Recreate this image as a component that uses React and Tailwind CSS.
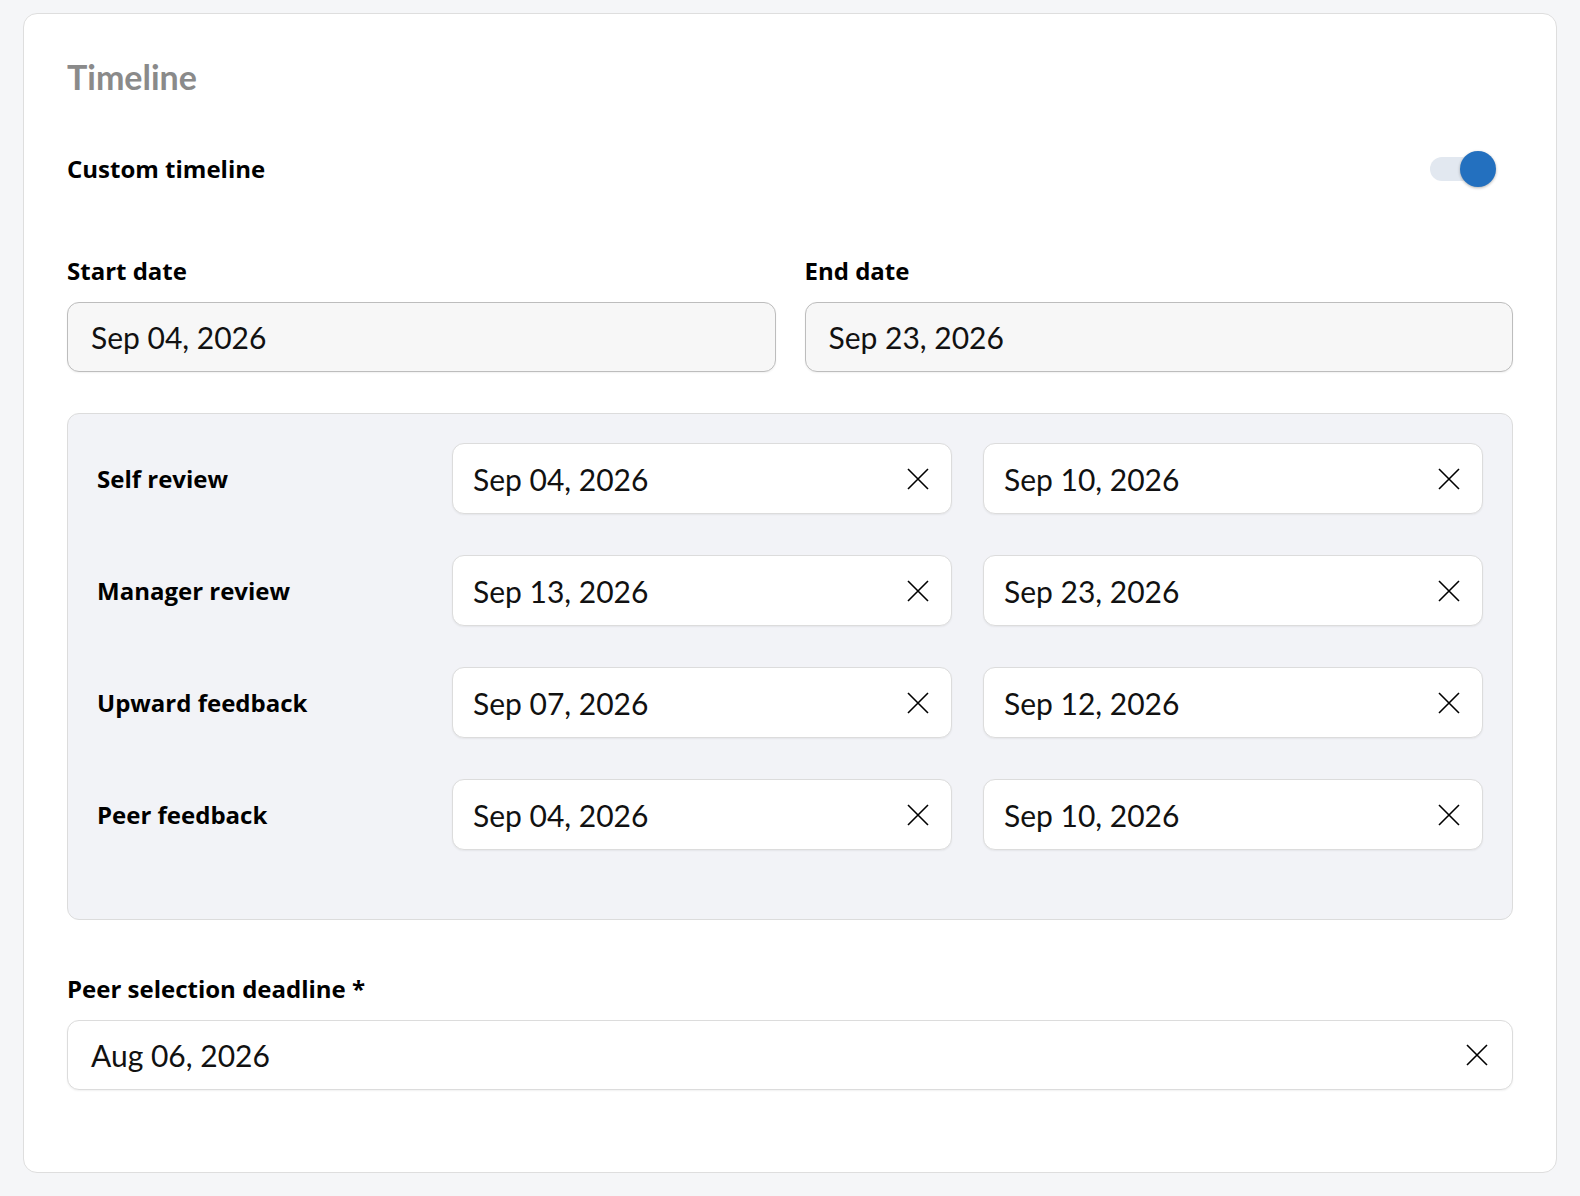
const phases = [
  { label: "Self review", start: "Sep 04, 2026", end: "Sep 10, 2026" },
  { label: "Manager review", start: "Sep 13, 2026", end: "Sep 23, 2026" },
  { label: "Upward feedback", start: "Sep 07, 2026", end: "Sep 12, 2026" },
  { label: "Peer feedback", start: "Sep 04, 2026", end: "Sep 10, 2026" },
];

const labelCls = "text-[24px] font-bold leading-[32px] text-black [font-family:'Open_Sans',sans-serif]";

function ClearIcon() {
  return (
    <svg width="22" height="22" viewBox="0 0 22 22" fill="none" stroke="black" strokeWidth="1.6">
      <path d="M1 1L21 21M21 1L1 21" />
    </svg>
  );
}

function ClearableDate({ value, wide }) {
  return (
    <div
      className={
        wide
          ? "flex h-[70px] items-center justify-between rounded-[12px] border border-[#dcdcdc] bg-white pl-[23px] pr-[24px] shadow-[0_1px_2px_rgba(0,0,0,0.06)]"
          : "flex h-[71px] items-center justify-between rounded-[12px] border border-[#dcdcdc] bg-white pl-[20px] pr-[22px] shadow-[0_1px_2px_rgba(0,0,0,0.06)]"
      }
    >
      <span className="text-[30px] leading-[36px] text-[#111]">{value}</span>
      <ClearIcon />
    </div>
  );
}

function ReadonlyDate({ label, value }) {
  return (
    <div className="flex flex-col gap-[15px]">
      <span className={labelCls}>{label}</span>
      <div className="flex h-[70px] items-center rounded-[12px] border border-[#bdbdbd] bg-[#f7f7f7] pl-[23px] shadow-[0_1px_2px_rgba(0,0,0,0.06)]">
        <span className="text-[30px] leading-[36px] text-[#111]">{value}</span>
      </div>
    </div>
  );
}

export default function App() {
  return (
    <div className="min-h-screen bg-[#f5f6f8] px-[23px] pb-[23px] pt-[13px]" style={{ fontFamily: "Lato, 'Noto Sans', sans-serif" }}>
      <div className="rounded-[14px] border border-[#dedede] bg-white px-[43px] pb-[82px] pt-[43px]">
        <h2 className="text-[34px] font-bold leading-[40px] text-[#8a8a8a]">Timeline</h2>

        <div className="mt-[56px] flex h-[32px] items-center justify-between">
          <span className={labelCls}>Custom timeline</span>
          <div className="relative mr-[25px] h-[24px] w-[58px] rounded-full bg-[#e2e8f0]">
            <div className="absolute right-[-8px] top-[-6px] h-[36px] w-[36px] rounded-full bg-[#2370bf] shadow-[0_1px_3px_rgba(0,0,0,0.3)]" />
          </div>
        </div>

        <div className="mt-[70px] grid grid-cols-2 gap-[29px]">
          <ReadonlyDate label="Start date" value="Sep 04, 2026" />
          <ReadonlyDate label="End date" value="Sep 23, 2026" />
        </div>

        <div className="mt-[41px] flex flex-col gap-[41px] rounded-[12px] border border-[#dcdcdc] bg-[#f2f3f7] px-[29px] pb-[69px] pt-[29px]">
          {phases.map((p) => (
            <div key={p.label} className="grid grid-cols-[1fr_500px_500px] items-center gap-[31px]">
              <span className={labelCls}>{p.label}</span>
              <ClearableDate value={p.start} />
              <ClearableDate value={p.end} />
            </div>
          ))}
        </div>

        <div className="mt-[53px] flex flex-col gap-[15px]">
          <span className={labelCls}>Peer selection deadline *</span>
          <ClearableDate value="Aug 06, 2026" wide />
        </div>
      </div>
    </div>
  );
}
